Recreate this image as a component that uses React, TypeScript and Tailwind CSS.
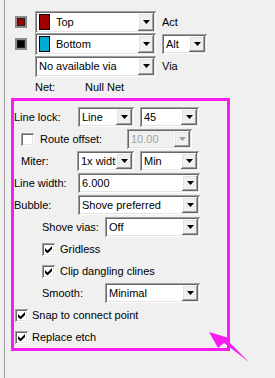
import React from "react";

const sunken =
  "shadow-[inset_1px_1px_0_#a0a0a0,inset_-1px_-1px_0_#ffffff,inset_2px_2px_0_#696969,inset_-2px_-2px_0_#e3e3e3]";
const raised =
  "shadow-[inset_-1px_-1px_0_#696969,inset_1px_1px_0_#ffffff,inset_-2px_-2px_0_#a0a0a0,inset_2px_2px_0_#e3e3e3]";

interface ComboProps {
  width: string;
  height?: string;
  text: string;
  swatch?: string;
  disabled?: boolean;
}

const Combo: React.FC<ComboProps> = ({ width, height = "h-[20px]", text, swatch, disabled }) => (
  <div
    className={`${width} ${height} ${sunken} flex p-[2px] ${disabled ? "bg-[#f0f0f0]" : "bg-white"}`}
  >
    <div className="flex flex-1 items-center overflow-hidden whitespace-nowrap pl-[2px]">
      {swatch && <span className={`mr-[6px] h-[16px] w-[11px] shrink-0 border border-black ${swatch}`} />}
      <span className={disabled ? "text-[#a0a0a0]" : "text-black"}>{text}</span>
    </div>
    <div className={`flex w-[16px] shrink-0 items-center justify-center bg-[#f0f0f0] ${raised}`}>
      <svg width="7" height="4" viewBox="0 0 7 4">
        <path d="M0 0h7L3.5 4z" fill={disabled ? "#a0a0a0" : "#000"} />
      </svg>
    </div>
  </div>
);

const Check: React.FC<{ checked?: boolean }> = ({ checked }) => (
  <div className={`flex h-[13px] w-[13px] shrink-0 items-center justify-center bg-white ${sunken}`}>
    {checked && (
      <svg width="7" height="7" viewBox="0 0 7 7">
        <path d="M0 2v3l2 2h1l4-4V0L2.5 4.5z" fill="#000" />
      </svg>
    )}
  </div>
);

const Swatch: React.FC<{ color: string }> = ({ color }) => (
  <div className="flex h-[12px] w-[12px] items-center justify-center border-2 border-[#8a8a8a] bg-[#d8d8d8]">
    <span className={`h-[8px] w-[8px] border border-[#202020] ${color}`} />
  </div>
);

const App: React.FC = () => {
  return (
    <div
      className="relative h-[378px] w-[275px] overflow-hidden bg-[#f0f0f0] pl-[4px] text-[11px] leading-[13px] text-black"
      style={{ fontFamily: '"Liberation Sans", Arial, sans-serif' }}
    >
      <div className="h-full border-l border-[#a0a0a0] pt-[11px]">
        {/* layer rows */}
        <div className="flex h-[22px] items-center pl-[10px]">
          <Swatch color="bg-[#a00000]" />
          <div className="ml-[8px]">
            <Combo width="w-[121px]" height="h-[22px]" text="Top" swatch="bg-[#a00000]" />
          </div>
          <span className="ml-[6px]">Act</span>
        </div>
        <div className="flex h-[22px] items-center pl-[10px]">
          <Swatch color="bg-black" />
          <div className="ml-[8px]">
            <Combo width="w-[121px]" height="h-[22px]" text="Bottom" swatch="bg-[#00a8d8]" />
          </div>
          <div className="ml-[6px]">
            <Combo width="w-[45px]" text="Alt" />
          </div>
        </div>
        <div className="flex h-[22px] items-center pl-[30px]">
          <Combo width="w-[121px]" height="h-[21px]" text="No available via" />
          <span className="ml-[6px]">Via</span>
        </div>
        <div className="mt-[4px] flex h-[13px] items-center pl-[30px]">
          <span className="w-[50px]">Net:</span>
          <span>Null Net</span>
        </div>

        {/* highlighted options */}
        <div className="ml-[6px] mt-[4px] w-[219px] border-[3px] border-[#f81cf0] pt-[5px]">
          <div className="flex h-[22px] items-center">
            <span className="w-[64px]">Line lock:</span>
            <Combo width="w-[56px]" text="Line" />
            <div className="ml-[6px]">
              <Combo width="w-[59px]" text="45" />
            </div>
          </div>
          <div className="flex h-[22px] items-center pl-[7px]">
            <Check />
            <span className="ml-[6px] w-[87px]">Route offset:</span>
            <Combo width="w-[65px]" text="10.00" disabled />
          </div>
          <div className="flex h-[22px] items-center pl-[7px]">
            <span className="w-[56px]">Miter:</span>
            <Combo width="w-[57px]" text="1x width" />
            <div className="ml-[6px]">
              <Combo width="w-[59px]" text="Min" />
            </div>
          </div>
          <div className="flex h-[22px] items-center">
            <span className="w-[64px]">Line width:</span>
            <Combo width="w-[122px]" text="6.000" />
          </div>
          <div className="flex h-[22px] items-center">
            <span className="w-[64px]">Bubble:</span>
            <Combo width="w-[122px]" text="Shove preferred" />
          </div>
          <div className="flex h-[22px] items-center pl-[28px]">
            <span className="w-[63px]">Shove vias:</span>
            <Combo width="w-[95px]" text="Off" />
          </div>
          <div className="flex h-[22px] items-center pl-[28px]">
            <Check checked />
            <span className="ml-[5px]">Gridless</span>
          </div>
          <div className="flex h-[22px] items-center pl-[28px]">
            <Check checked />
            <span className="ml-[5px]">Clip dangling clines</span>
          </div>
          <div className="flex h-[22px] items-center pl-[28px]">
            <span className="w-[63px]">Smooth:</span>
            <Combo width="w-[95px]" text="Minimal" />
          </div>
          <div className="flex h-[22px] items-center pl-[1px]">
            <Check checked />
            <span className="ml-[4px]">Snap to connect point</span>
          </div>
          <div className="flex h-[22px] items-center pl-[1px]">
            <Check checked />
            <span className="ml-[4px]">Replace etch</span>
          </div>
        </div>
      </div>

      {/* callout arrow */}
      <svg className="pointer-events-none absolute left-0 top-0" width="275" height="378" viewBox="0 0 275 378">
        <path d="M209 332L218 348L224 343L249 362L227 340L229 338Z" fill="#f81cf0" />
      </svg>
    </div>
  );
};

export default App;
